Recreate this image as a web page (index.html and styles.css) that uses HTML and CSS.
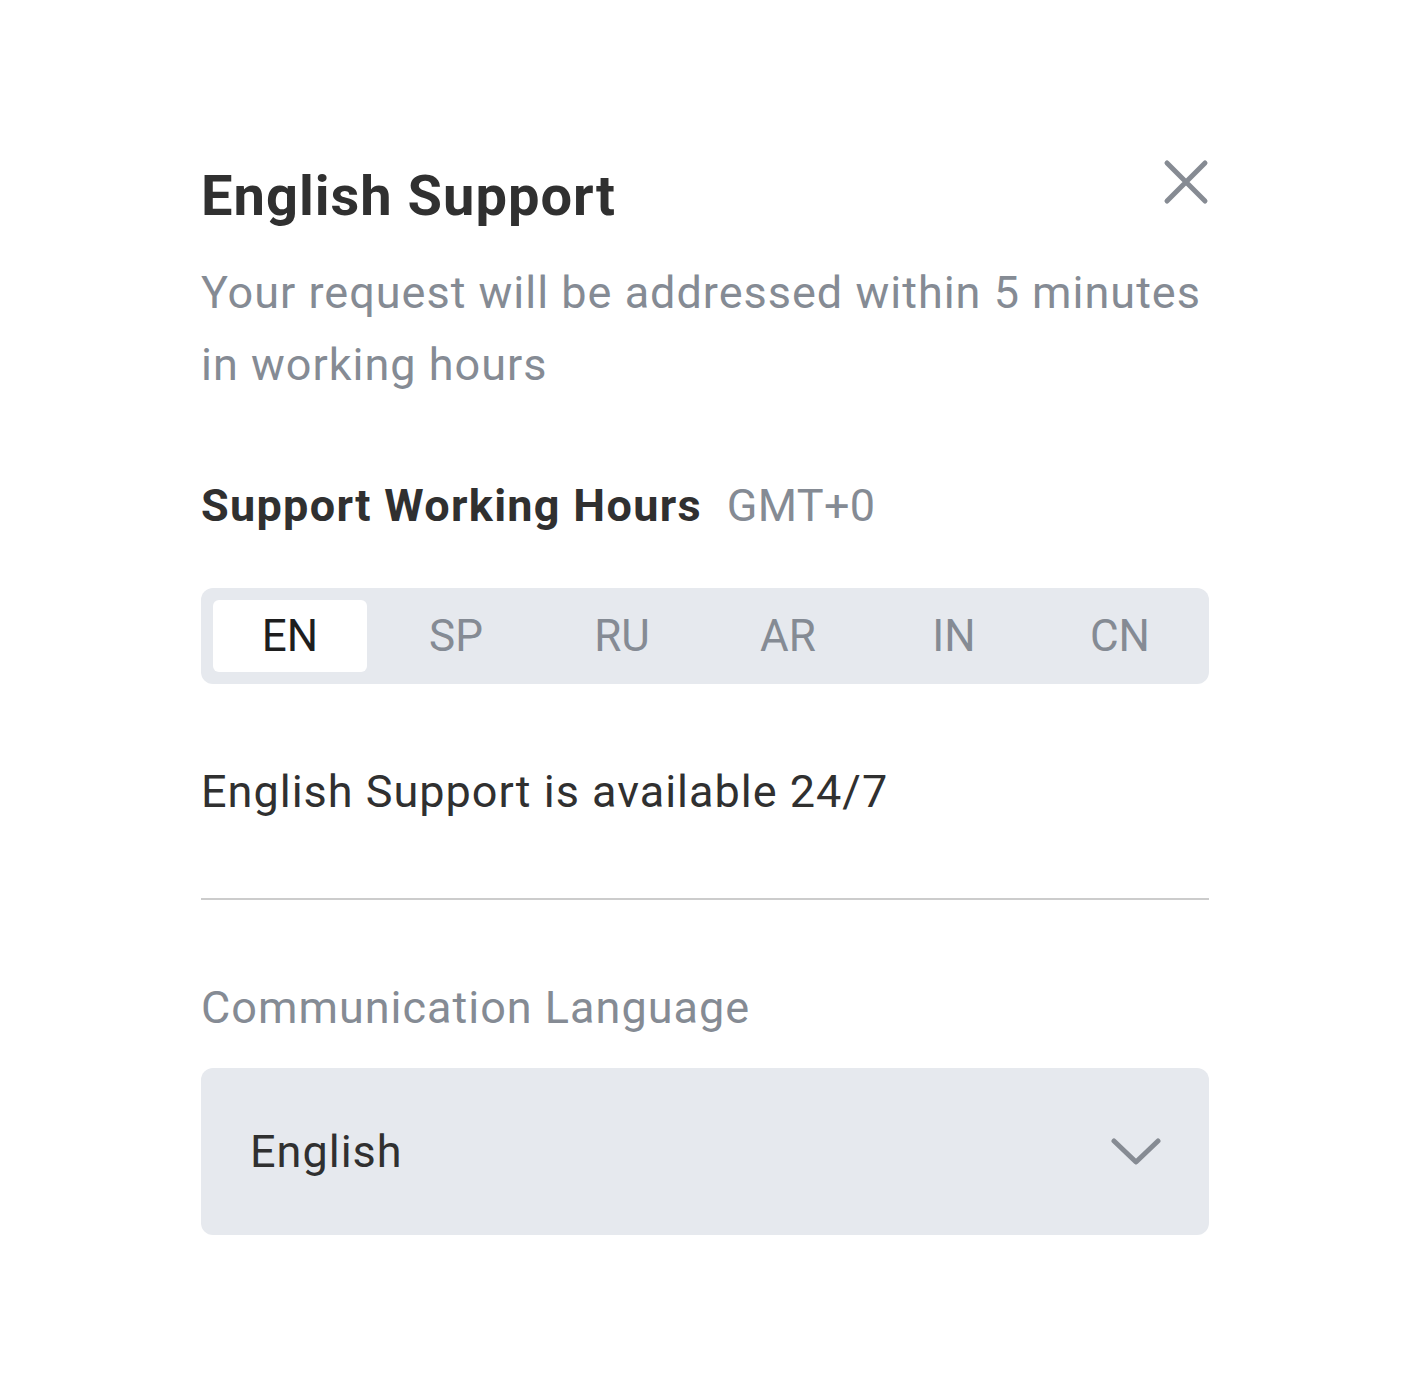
FILE: index.html
```html
<!DOCTYPE html>
<html lang="en">
<head>
<meta charset="utf-8">
<title>English Support</title>
<link rel="stylesheet" href="styles.css">
</head>
<body>
<div class="modal">
  <div class="header">
    <h1 class="title">English Support</h1>
    <button class="close" aria-label="Close">
      <svg width="48" height="48" viewBox="0 0 48 48"><path d="M5 5L43 43M43 5L5 43" stroke="#868b93" stroke-width="5" stroke-linecap="round" fill="none"/></svg>
    </button>
  </div>
  <p class="subtitle">Your request will be addressed within 5 minutes in working hours</p>
  <div class="hours-head">
    <span class="hours-title">Support Working Hours</span>
    <span class="tz">GMT+0</span>
  </div>
  <div class="tabs">
    <div class="tab active">EN</div>
    <div class="tab">SP</div>
    <div class="tab">RU</div>
    <div class="tab">AR</div>
    <div class="tab">IN</div>
    <div class="tab">CN</div>
  </div>
  <p class="avail">English Support is available 24/7</p>
  <hr class="divider">
  <div class="label">Communication Language</div>
  <div class="select">
    <span class="select-value">English</span>
    <svg class="chev" width="50" height="28" viewBox="0 0 50 28"><path d="M3 3L25 24L47 3" stroke="#868b93" stroke-width="5" stroke-linecap="round" stroke-linejoin="round" fill="none"/></svg>
  </div>
</div>
</body>
</html>
```

FILE: styles.css
```css
* { box-sizing: border-box; }
body {
  margin: 0;
  background: #ffffff;
  font-family: Roboto, "Liberation Sans", sans-serif;
  color: #303030;
}
.modal {
  width: 1008px;
  margin-left: 201px;
  padding-top: 156px;
}
.header {
  display: flex;
  justify-content: space-between;
  align-items: flex-start;
}
.title {
  margin: 0;
  font-size: 56px;
  line-height: 80px;
  font-weight: 700;
  letter-spacing: 1px;
  color: #303030;
}
.close {
  border: 0;
  background: none;
  padding: 0;
  margin-top: 2px;
  margin-right: -1px;
  width: 48px;
  height: 48px;
  display: flex;
}
.subtitle {
  margin: 21px 0 0;
  font-size: 45px;
  line-height: 72px;
  letter-spacing: 1px;
  color: #858b94;
}
.hours-head {
  margin-top: 69px;
  display: flex;
  align-items: baseline;
  gap: 25px;
  line-height: 72px;
}
.hours-title {
  font-size: 45px;
  font-weight: 700;
  letter-spacing: 1.3px;
  color: #303030;
}
.tz {
  font-size: 45px;
  letter-spacing: 0.3px;
  color: #858b94;
}
.tabs {
  margin-top: 46px;
  background: #e6e9ee;
  border-radius: 12px;
  padding: 12px;
  display: flex;
  gap: 12px;
}
.tab {
  flex: 1;
  height: 72px;
  display: flex;
  align-items: center;
  justify-content: center;
  font-size: 44px;
  color: #858b94;
  border-radius: 6px;
}
.tab.active {
  background: #ffffff;
  color: #1e1e1e;
}
.avail {
  margin: 72px 0 0;
  font-size: 45px;
  line-height: 72px;
  letter-spacing: 1px;
  color: #303030;
}
.divider {
  margin: 70px 0 0;
  border: 0;
  height: 2px;
  background: #cccccc;
}
.label {
  margin-top: 72px;
  font-size: 45px;
  line-height: 72px;
  letter-spacing: 1px;
  color: #858b94;
}
.select {
  margin-top: 24px;
  height: 167px;
  background: #e6e9ee;
  border-radius: 12px;
  padding: 0 48px 0 49px;
  display: flex;
  align-items: center;
  justify-content: space-between;
}
.select-value {
  font-size: 45px;
  letter-spacing: 1px;
  color: #303030;
}
.chev { display: block; }
```
